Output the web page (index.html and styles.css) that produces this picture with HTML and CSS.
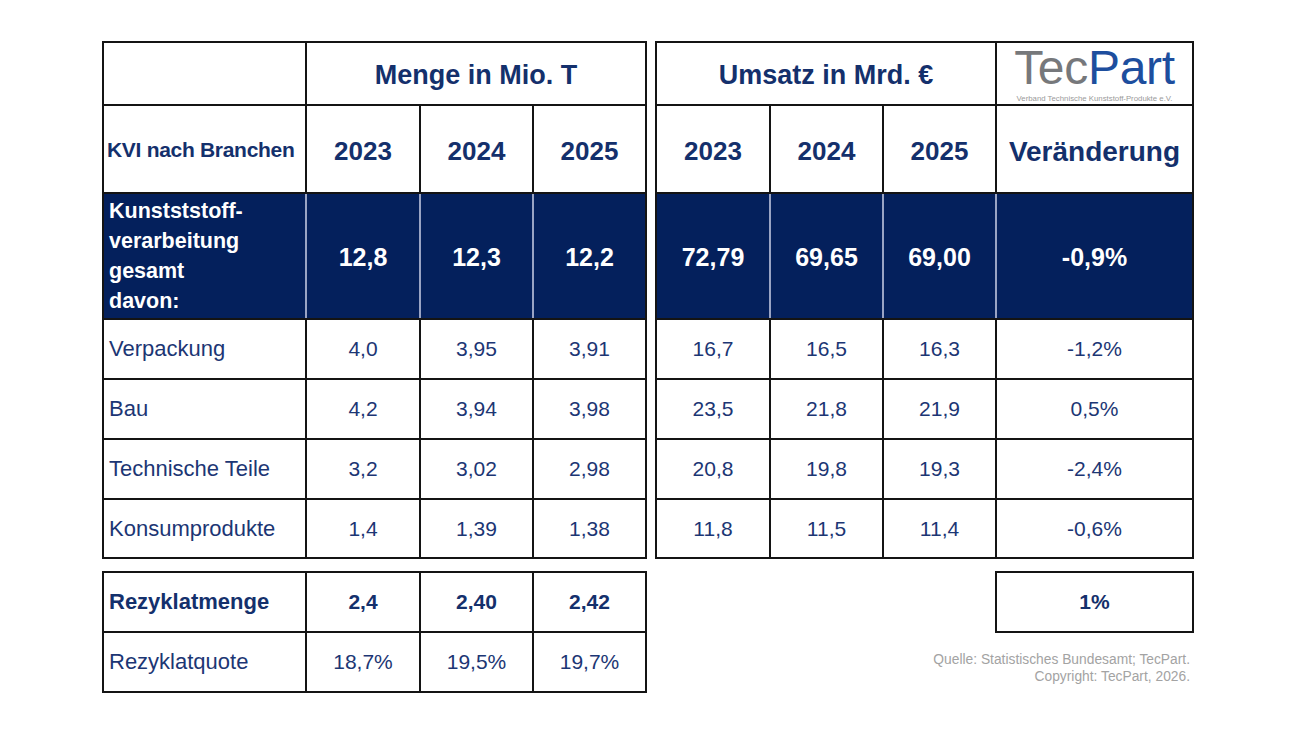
FILE: index.html
```html
<!DOCTYPE html>
<html lang="de">
<head>
<meta charset="utf-8">
<title>KVI nach Branchen</title>
<link rel="stylesheet" href="styles.css">
</head>
<body>
<div class="page">
  <div class="top">
    <div class="tbl left">
      <div class="c"></div>
      <div class="c hd span3">Menge in Mio. T</div>
      <div class="c lblhd">KVI nach Branchen</div>
      <div class="c yr">2023</div>
      <div class="c yr">2024</div>
      <div class="c yr">2025</div>
      <div class="dark">
        <div class="d dlbl">Kunstststoff-<br>verarbeitung<br>gesamt<br>davon:</div>
        <div class="d dnum">12,8</div>
        <div class="d dnum">12,3</div>
        <div class="d dnum">12,2</div>
      </div>
      <div class="c lbl">Verpackung</div>
      <div class="c num">4,0</div>
      <div class="c num">3,95</div>
      <div class="c num">3,91</div>
      <div class="c lbl">Bau</div>
      <div class="c num">4,2</div>
      <div class="c num">3,94</div>
      <div class="c num">3,98</div>
      <div class="c lbl">Technische Teile</div>
      <div class="c num">3,2</div>
      <div class="c num">3,02</div>
      <div class="c num">2,98</div>
      <div class="c lbl">Konsumprodukte</div>
      <div class="c num">1,4</div>
      <div class="c num">1,39</div>
      <div class="c num">1,38</div>
    </div>
    <div class="tbl right">
      <div class="c hd span3">Umsatz in Mrd. €</div>
      <div class="c logo">
        <div class="logo-word"><span class="tec">Tec</span><span class="part">Part</span></div>
        <div class="logo-sub">Verband Technische Kunststoff-Produkte e.V.</div>
      </div>
      <div class="c yr">2023</div>
      <div class="c yr">2024</div>
      <div class="c yr">2025</div>
      <div class="c yr wide">Veränderung</div>
      <div class="dark">
        <div class="d dnum">72,79</div>
        <div class="d dnum">69,65</div>
        <div class="d dnum">69,00</div>
        <div class="d dnum">-0,9%</div>
      </div>
      <div class="c num">16,7</div>
      <div class="c num">16,5</div>
      <div class="c num">16,3</div>
      <div class="c num">-1,2%</div>
      <div class="c num">23,5</div>
      <div class="c num">21,8</div>
      <div class="c num">21,9</div>
      <div class="c num">0,5%</div>
      <div class="c num">20,8</div>
      <div class="c num">19,8</div>
      <div class="c num">19,3</div>
      <div class="c num">-2,4%</div>
      <div class="c num">11,8</div>
      <div class="c num">11,5</div>
      <div class="c num">11,4</div>
      <div class="c num">-0,6%</div>
    </div>
  </div>
  <div class="bottom">
    <div class="tbl recy">
      <div class="c lbl bold">Rezyklatmenge</div>
      <div class="c num bold">2,4</div>
      <div class="c num bold">2,40</div>
      <div class="c num bold">2,42</div>
      <div class="c lbl">Rezyklatquote</div>
      <div class="c num">18,7%</div>
      <div class="c num">19,5%</div>
      <div class="c num">19,7%</div>
    </div>
    <div class="side">
      <div class="tbl onebox">
        <div class="c num bold">1%</div>
      </div>
      <div class="source">Quelle: Statistisches Bundesamt; TecPart.<br>Copyright: TecPart, 2026.</div>
    </div>
  </div>
</div>
</body>
</html>
```

FILE: styles.css
```css
* { box-sizing: border-box; }
html, body { margin: 0; padding: 0; background: #fff; }
body {
  font-family: "Liberation Sans", Arial, sans-serif;
  color: #1c3674;
  width: 1298px;
  height: 730px;
  overflow: hidden;
}
.page {
  padding: 41px 0 0 102px;
  display: flex;
  flex-direction: column;
  gap: 12px;
}
.top {
  display: flex;
  gap: 8px;
}
.tbl {
  display: grid;
  background: #141414;
  padding: 2px;
  gap: 2px;
}
.left {
  grid-template-columns: 201px 112px 111px 111px;
  grid-template-rows: 61px 86px 124px 58px 58px 58px 57px;
}
.right {
  grid-template-columns: 112px 111px 111px 195px;
  grid-template-rows: 61px 86px 124px 58px 58px 58px 57px;
}
.c {
  background: #fff;
  display: flex;
  align-items: center;
  justify-content: center;
}
.span3 { grid-column: span 3; }
.hd {
  font-weight: 700;
  font-size: 27px;
  color: #14306c;
  padding-top: 4px;
}
.yr {
  font-weight: 700;
  font-size: 26px;
  color: #14306c;
  padding-top: 5px;
}
.yr.wide { font-size: 28px; }
.lblhd {
  justify-content: flex-start;
  padding-left: 3px;
  padding-top: 2px;
  font-weight: 700;
  font-size: 21px;
  letter-spacing: -0.3px;
  color: #14306c;
}
.lbl {
  justify-content: flex-start;
  padding-left: 5px;
  font-size: 22px;
}
.num {
  font-size: 21px;
}
.bold {
  font-weight: 700;
  color: #14306c;
}
.lbl.bold { font-size: 22px; }
.dark {
  grid-column: 1 / -1;
  display: grid;
  grid-template-columns: inherit;
  gap: 2px;
  background: #9aa4c4;
}
.d {
  background: #04205c;
  color: #fff;
  font-weight: 700;
  display: flex;
  align-items: center;
}
.dlbl {
  padding-left: 5px;
  font-size: 21.5px;
  line-height: 30px;
}
.dnum {
  justify-content: center;
  font-size: 25px;
  padding-top: 3px;
}
.logo {
  flex-direction: column;
  justify-content: flex-start;
  padding-top: 2px;
}
.logo-word {
  font-size: 48px;
  line-height: 46px;
  letter-spacing: -0.3px;
  font-weight: 400;
}
.tec { color: #76787b; }
.part { color: #1d4e9e; }
.logo-sub {
  font-size: 7.8px;
  color: #9a9a9a;
  margin-top: 3px;
}
.bottom {
  display: flex;
  gap: 8px;
  align-items: flex-start;
}
.recy {
  grid-template-columns: 201px 112px 111px 111px;
  grid-template-rows: 58px 58px;
}
.side {
  width: 539px;
  display: flex;
  flex-direction: column;
  align-items: flex-end;
}
.onebox {
  grid-template-columns: 195px;
  grid-template-rows: 58px;
}
.source {
  margin-top: 18px;
  margin-right: 4px;
  text-align: right;
  font-size: 13.8px;
  line-height: 17px;
  color: #a3a3a3;
}
```
